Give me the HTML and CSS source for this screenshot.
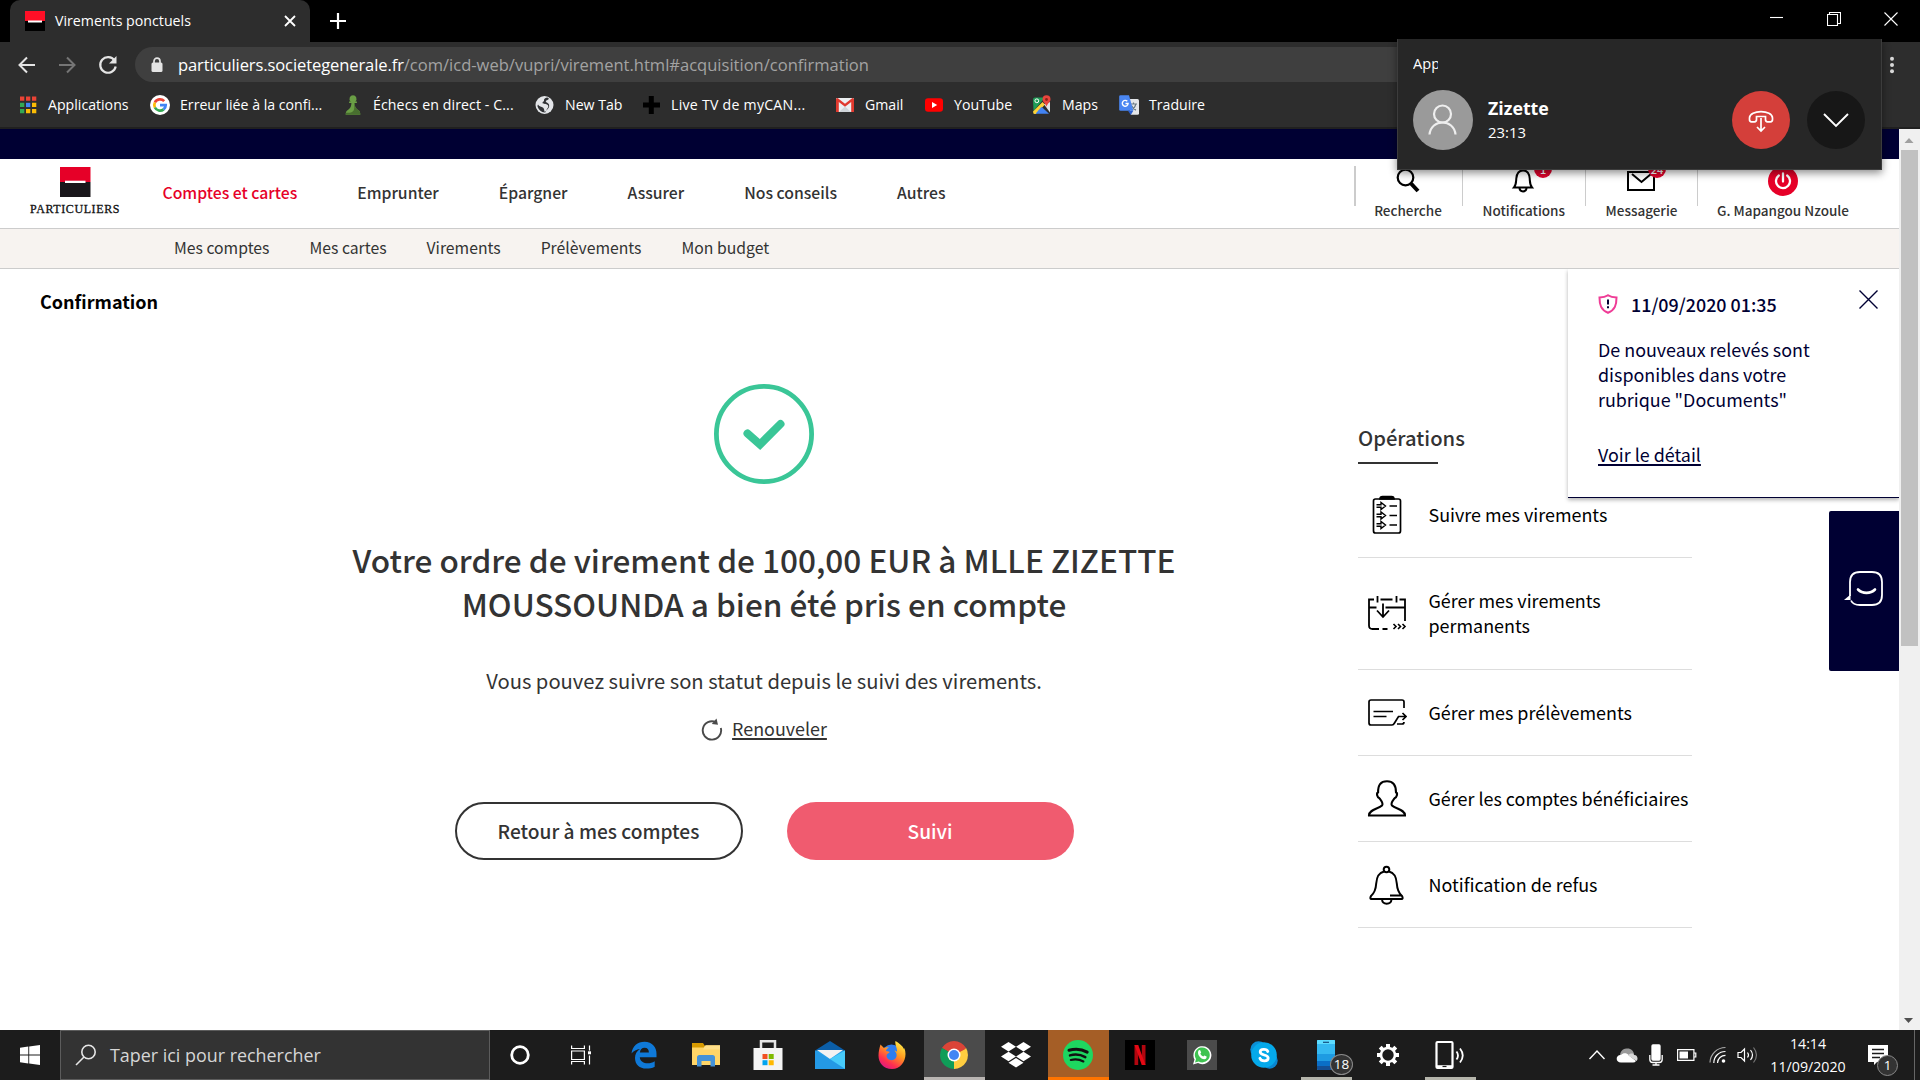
FILE: index.html
```html
<!DOCTYPE html>
<html lang="fr">
<head>
<meta charset="utf-8">
<title>Virements ponctuels</title>
<link rel="stylesheet" href="styles.css">
</head>
<body>
<div class="browser">
  <div class="tabstrip">
    <div class="tab">
      <svg class="favicon" width="20" height="20" viewBox="0 0 20 20"><path fill="#ff0f26" d="M0 0h20v10H0z"/><path d="M0 10h20v10H0z"/><path fill="#fff" d="M3 9.5h14v2H3z"/></svg>
      <span class="tab-title">Virements ponctuels</span>
      <svg class="tab-close" width="12" height="12" viewBox="0 0 12 12" stroke="#fff" stroke-width="1.8"><path d="M1 1l10 10M11 1L1 11"/></svg>
    </div>
    <svg class="new-tab" width="16" height="16" viewBox="0 0 16 16" stroke="#fff" stroke-width="2.2"><path d="M8 0v16M0 8h16"/></svg>
    <div class="win-controls">
      <svg width="14" height="14" viewBox="0 0 14 14" stroke="#fff" stroke-width="1.1"><path d="M0 5.5h13"/></svg>
      <svg width="14" height="14" viewBox="0 0 14 14" fill="none" stroke="#fff" stroke-width="1.1"><path d="M.5 2.5h10v11H.5zM2.5 2.500V.5h11v11h-3"/></svg>
      <svg width="14" height="14" viewBox="0 0 14 14" stroke="#fff" stroke-width="1.1"><path d="M.5 .5l13 13M13.500 .5l-13 13"/></svg>
    </div>
  </div>
  <div class="toolbar">
    <svg width="18" height="18" viewBox="0 0 18 18" fill="none" stroke="#e4e4e4" stroke-width="2"><path d="M17 9H2M9 1.500L1.500 9 9 16.500"/></svg>
    <svg width="18" height="18" viewBox="0 0 18 18" fill="none" stroke="#757575" stroke-width="2"><path d="M1 9h15M9 1.500L16.500 9 9 16.500"/></svg>
    <svg width="20" height="20" viewBox="0 0 20 20" fill="none" stroke="#e4e4e4" stroke-width="2.200"><path d="M16.500 5.500A7.800 7.800 0 1 0 17.700 11.500"/><path fill="#e4e4e4" stroke="none" d="M18.500 1v7.500H11z"/></svg>
    <div class="omnibox">
      <svg width="12" height="16" viewBox="0 0 12 16"><path fill="none" stroke="#e4e4e4" stroke-width="1.700" d="M3 7V4.200a3 3 0 0 1 6 0V7"/><rect x=".5" y="5.500" width="11" height="9.500" rx="1.500" fill="#e4e4e4"/></svg>
      <span class="url"><b>particuliers.societegenerale.fr</b>/com/icd-web/vupri/virement.html#acquisition/confirmation</span>
    </div>
    <svg class="kebab" width="6" height="18" viewBox="0 0 6 18" fill="#d8d8d8"><circle cx="3" cy="2.800" r="2"/><circle cx="3" cy="9" r="2"/><circle cx="3" cy="15.200" r="2"/></svg>
  </div>
  <div class="bookmarks">
    <span class="bm"><svg width="20" height="20" viewBox="0 0 20 20"><path fill="#ea4335" d="M2 1.500h4.300v4.300H2zM8 1.500h4.300v4.300H8zM14 1.500h4.300v4.300H14z"/><path fill="#34a853" d="M2 7.800h4.300v4.300H2zM2 14h4.300v4.300H2z"/><path fill="#4285f4" d="M8 7.800h4.300v4.300H8z"/><path fill="#fbbc05" d="M14 7.800h4.300v4.300H14zM8 14h4.300v4.300H8zM14 14h4.300v4.300H14z"/></svg>Applications</span>
    <span class="bm"><svg width="20" height="20" viewBox="0 0 20 20" fill="none" stroke-width="2.700"><circle cx="10" cy="10" r="10" fill="#fff"/><path stroke="#ea4335" d="M4.900 7.500A5.700 5.700 0 0 1 14.200 6.200"/><path stroke="#fbbc05" d="M4.900 7.500a5.700 5.700 0 0 0 0 5"/><path stroke="#34a853" d="M4.900 12.500a5.700 5.700 0 0 0 8.700 1.900"/><path stroke="#4285f4" d="M10 10.100h5.700a5.700 5.700 0 0 1-2.100 4.300"/></svg>Erreur liée à la confi...</span>
    <span class="bm"><svg width="20" height="20" viewBox="0 0 20 20"><path fill="#6a9e45" d="M10 .3a3.600 3.600 0 0 1 2.400 6.200h1.500v1.600h-2.300c.2 4 1.300 5.600 4.200 7.500 1.600 1.100 1.500 4.100 1.500 4.100H2.700s-.1-3 1.500-4.100c2.900-1.900 4-3.500 4.200-7.500H6.100V6.500h1.500A3.600 3.600 0 0 1 10 .3z"/><path fill="#486f2f" d="M11 8h.600c.200 4 1.300 5.600 4.200 7.500 1.600 1.100 1.500 4.200 1.500 4.200H3v-2c8 .5 9-2 8-9.700z"/></svg>Échecs en direct - C...</span>
    <span class="bm"><svg width="20" height="20" viewBox="0 0 20 20"><circle cx="9.500" cy="10" r="9" fill="#e3e5e8"/><path fill="#303235" d="M12.500 2.500c-2 .2-4 1.500-3.500 3 .4 1.200-1.500 1-1.500 2.300 0 1.400 3 1 4.500 1.700 1.700.7 1.600 2.700.5 3.800-.8.900-1.200 2.900-2.700 3.700-.8-1-.3-3.200-1.600-4.200C6.600 11.600 4 11.500 3 9.500L2.400 11c1 3.500 3.600 6.500 7.600 6.500 1.500-.3.500-1.400 1.500-2.200 1.800-1.300 3.300-3.300 2.500-5.700-.6-1.700-3-2-3.200-3.100-.2-1.300 2.300-1.200 3.200-2.700z"/></svg>New Tab</span>
    <span class="bm"><svg width="20" height="20" viewBox="0 0 20 20"><path d="M7.800 1h5v6.500H19v5h-6.200V19h-5v-6.500H2v-5h5.800z"/></svg>Live TV de myCAN...</span>
    <span class="bm"><svg width="20" height="20" viewBox="0 0 20 20"><rect x="1" y="3" width="18" height="14" rx="1.300" fill="#eceff1"/><path fill="#cfd4d8" d="M4 17l6-5.500 6 5.500z"/><path fill="#e0392e" d="M1 17V4.300Q1.300 3 2.600 3L10 8.800 17.400 3Q18.700 3 19 4.300V17h-2.800V6.900L10 11.700 3.800 6.900V17z"/></svg>Gmail</span>
    <span class="bm"><svg width="20" height="20" viewBox="0 0 20 20"><rect x="1" y="3.300" width="18" height="13.500" rx="3" fill="#f00"/><path fill="#fff" d="M8 7l5.200 3L8 13z"/></svg>YouTube</span>
    <span class="bm"><svg width="20" height="20" viewBox="0 0 20 20"><path fill="#1e9d57" d="M1 4.500Q1 2.500 3 2.500h10L1.500 16z"/><path fill="#fdd338" d="M1 16.500L10.500 7l2.500 2.500L4 19H2.500Q1 19 1 16.500z"/><path fill="#4283f3" d="M3.500 18.700l6-7 7.500 7z"/><path fill="#dfe3e6" d="M12 9.300L18 7v10.500z"/><circle cx="4.800" cy="5.800" r="1.900" fill="none" stroke="#fff" stroke-width="1"/><path fill="#e8453c" d="M14.500.3a4 4 0 0 1 4 4c0 3-3 3.700-4 7.500-1-3.800-4-4.500-4-7.500a4 4 0 0 1 4-4z"/><circle cx="14.500" cy="4.500" r="1.400" fill="#8c2019"/></svg>Maps</span>
    <span class="bm"><svg width="20" height="20" viewBox="0 0 20 20"><path fill="#e4e6e9" d="M8 4h10.500Q20 4 20 5.500v13Q20 19.800 18.500 19.800H12z"/><path fill="none" stroke="#6a7a84" stroke-width="1.200" d="M11 9h7M14.500 7.500V9M16.800 9c-.5 3-2.500 5-4.300 6M12.500 10.500c1 2.500 2.800 3.800 4.500 4.600"/><path fill="#4a86f2" d="M1.500.2H10l4.300 15.600H1.500Q.2 15.800.2 14.500v-13Q.2.200 1.500.200z"/><path fill="#2b5fd0" d="M9 15.800h5.300L11.800 20z"/><path fill="none" stroke="#fff" stroke-width="1.400" d="M8.300 6.300A2.900 2.900 0 1 0 9.100 8.500H6.500"/></svg>Traduire</span>
  </div>

  <div class="viewport">
    <div class="page">
      <div class="navy-band"></div>
      <header class="site-header">
        <div class="brand">
          <svg width="31" height="30" viewBox="0 0 31 30"><path fill="#e60028" d="M0 0h30.500v15H0z"/><path fill="#1a171b" d="M0 15h30.500v15H0z"/><path fill="#fff" d="M5 13.700h20.500v2.300H5z"/></svg>
          <span>PARTICULIERS</span>
        </div>
        <nav class="main-nav"><a class="active">Comptes et cartes</a><a>Emprunter</a><a>Épargner</a><a>Assurer</a><a>Nos conseils</a><a>Autres</a></nav>
        <div class="tools">
          <div class="tool first"><svg width="28" height="28" viewBox="0 0 28 28" fill="none" stroke="#000"><circle cx="11.500" cy="11.500" r="7.800" stroke-width="2.200"/><path stroke-width="4" d="M17 17.500l7 7.500"/></svg><span>Recherche</span></div>
          <div class="tool"><svg width="28" height="28" viewBox="0 0 28 28" fill="none" stroke="#000" stroke-width="2"><path d="M5 21.500c2.200-2.500 2-5 2.300-9C7.800 7 10 4.500 14 4.500s6.200 2.500 6.700 8c.3 4 .1 6.500 2.300 9z"/><path d="M10.500 22c.3 4.500 6.700 4.500 7 0M14 4.500V2.500"/></svg><i class="badge">1</i><span>Notifications</span></div>
          <div class="tool"><svg width="28" height="28" viewBox="0 0 28 28" fill="none" stroke="#000" stroke-width="2"><path d="M1 6h26v18H1z"/><path d="M5 8l9.500 8L24 8"/></svg><i class="badge">24</i><span>Messagerie</span></div>
          <div class="tool user"><svg width="30" height="30" viewBox="0 0 30 30" fill="none" stroke="#fff" stroke-width="2.300"><circle cx="15" cy="15" r="15" fill="#e60028" stroke="none"/><path stroke-linecap="round" d="M10.800 9.500a7 7 0 1 0 8.400 0M15 7.500v8"/></svg><span>G. Mapangou Nzoule</span></div>
        </div>
      </header>
      <nav class="sub-nav"><a>Mes comptes</a><a>Mes cartes</a><a>Virements</a><a>Prélèvements</a><a>Mon budget</a></nav>
      <main>
        <section class="confirm">
          <h1>Confirmation</h1>
          <div class="result">
            <svg width="100" height="100" viewBox="0 0 100 100" fill="none" stroke="#3ac697"><circle cx="50" cy="50" r="47.600" stroke-width="4.800"/><path stroke-width="8" stroke-linecap="round" stroke-linejoin="miter" d="M33.500 49.500L46 60.500 66.500 40"/></svg>
            <h2>Votre ordre de virement de 100,00 EUR à MLLE ZIZETTE<br>MOUSSOUNDA a bien été pris en compte</h2>
            <p>Vous pouvez suivre son statut depuis le suivi des virements.</p>
            <div class="renew"><svg width="22" height="24" viewBox="0 0 22 24" fill="none" stroke="#4a4a4a" stroke-width="1.900"><path d="M15 4.200A9.200 9.200 0 1 0 19.800 10"/><path fill="#4a4a4a" stroke="none" d="M15.500.500L17 6.800 10.800 6z"/></svg><a>Renouveler</a></div>
            <div class="buttons"><a class="btn outline">Retour à mes comptes</a><a class="btn solid">Suivi</a></div>
          </div>
        </section>
        <aside>
          <h3>Opérations</h3>
          <ul>
            <li><svg width="40" height="44" viewBox="0 0 40 44" fill="none" stroke="#000" stroke-width="1.700"><rect x="6.500" y="6" width="27" height="34" rx="2"/><path fill="#000" d="M13 6q0-2.500 2.500-2.500h9Q27 3.500 27 6z"/><path d="M22.500 13H30M22.500 22.500H30M22.500 32H30"/><path stroke-width="1.400" d="M9.500 11.700H14V9.500l4.500 3.500-4.500 3.500v-2.200H9.500M9.500 21.200H14V19l4.500 3.500L14 26v-2.200H9.500M9.500 30.700H14v-2.200l4.500 3.500-4.500 3.500v-2.200H9.500"/></svg>Suivre mes virements</li>
            <li class="tall"><svg width="40" height="44" viewBox="0 0 40 44" fill="none" stroke="#000" stroke-width="1.800"><path d="M12 38H5.500Q2 38 2 34.500V8.500h5M10.500 5v6.500M13.500 8.500h12M29.500 5v6.500M32.500 8.500H38v21.500M2 16.500h7.500M18.500 16.500H38M16 12.500V25.500M10 19.500l6 6.500 6-6.500M15.500 38h5"/><path stroke-width="1.600" d="M26.500 33l2.500 2.500-2.500 2.500M31 33l2.500 2.500L31 38M35.500 33l2.500 2.500-2.500 2.500"/></svg><span>Gérer mes virements<br>permanents</span></li>
            <li><svg width="40" height="44" viewBox="0 0 40 44" fill="none" stroke="#000" stroke-width="1.700"><path d="M37 17V11q0-2-2-2H4Q2 9 2 11v21q0 2 2 2h21q1.500 0 2.500-2l4-6.500H39M6.500 20.500h19.500M6.500 25.500h13M35.500 22l3.500 3.500-3.500 3.500M30 33h5q2 0 2-2"/></svg>Gérer mes prélèvements</li>
            <li><svg width="40" height="44" viewBox="0 0 40 44" fill="none" stroke="#000" stroke-width="2.100"><path d="M2 38.500c0-6 9.500-6.500 13-10 1.700-2-.8-5-2.500-7.200-2.500-1-3.300-5-1.400-6C11 8 13.500 4.300 20 4.300S29 8 29 15.300c1.900 1 1 5-1.500 6-1.700 2.200-4.200 5.200-2.500 7.200 3.500 3.500 13 4 13 10z"/></svg>Gérer les comptes bénéficiaires</li>
            <li><svg width="40" height="44" viewBox="0 0 40 44" fill="none" stroke="#000" stroke-width="2"><circle cx="19.500" cy="6.500" r="2.800"/><path d="M17 8.500c-6 1.500-7.300 6-7.800 12C8.800 27 7.500 30 4 33q-1.500 3 .5 3h30q2 0 .5-3c-3.500-3-4.800-6-5.200-12.500-.5-6-1.800-10.500-7.800-12M15 36.500c.5 5.500 9 5.500 9.500 0M23 32.500h11"/></svg>Notification de refus</li>
          </ul>
        </aside>
      </main>
      <div class="notice">
        <div class="notice-head">
          <svg width="20" height="20" viewBox="0 0 20 20" fill="none"><path stroke="#ef3c96" stroke-width="2" d="M10 1.200c2.500 1.800 5 2.300 8.500 2.300C18.500 11 17 16 10 18.800 3 16 1.500 11 1.500 3.500c3.500 0 6-.5 8.500-2.300z"/><path stroke="#003" stroke-width="2" d="M10 5.500v5M10 12.200v2"/></svg>
          <b>11/09/2020 01:35</b>
          <svg class="x" width="19" height="19" viewBox="0 0 19 19" stroke="#003" stroke-width="1.400"><path d="M.5.500l18 18M18.500.500l-18 18"/></svg>
        </div>
        <p>De nouveaux relevés sont<br>disponibles dans votre<br>rubrique "Documents"</p>
        <a>Voir le détail</a>
      </div>
      <div class="chat"><svg width="40" height="36" viewBox="0 0 40 36" fill="none" stroke="#fff" stroke-width="1.800"><path d="M6 25V11q0-10 10-10h12q10 0 10 10v13q0 10-10 10H16q-7 0-9-4.500"/><path fill="#fff" stroke="none" d="M6.500 23.500v5.500L0 29z"/><path stroke-width="2.600" stroke-linecap="round" d="M14 18.500c4.500 4.500 12.500 4.500 17 0"/></svg></div>
    </div>
    <div class="scrollbar">
      <svg width="20" height="21" viewBox="0 0 20 21"><path fill="#a0a0a0" d="M5.500 14L10 9l4.500 5z"/></svg>
      <div class="thumb"></div>
      <svg width="20" height="20" viewBox="0 0 20 20"><path fill="#505050" d="M5 8l4.500 5L14 8z"/></svg>
    </div>
  </div>
</div>

<div class="call">
  <div class="call-app"><span>App</span></div>
  <div class="call-row">
    <svg width="60" height="60" viewBox="0 0 60 60" fill="none" stroke="#eee" stroke-width="2.200"><circle cx="30" cy="30" r="30" fill="#9a9a9a" stroke="none"/><circle cx="29.500" cy="24" r="8.500"/><path d="M16.500 44.500c1.500-16 24.500-16 26 0"/></svg>
    <div class="caller"><b>Zizette</b><span>23:13</span></div>
    <svg width="58" height="58" viewBox="0 0 58 58" fill="none" stroke="#fff" stroke-width="1.700"><circle cx="29" cy="29" r="29" fill="#d43f3a" stroke="none"/><path d="M17.500 27c0-8.500 23-8.500 23 0v1.500q0 2.300-2 2.300h-3q-2 0-2-2.300V25.500h-9v3q0 2.300-2 2.300h-3q-2 0-2-2.300zM29 27v12.500M25 36l4 4 4-4"/></svg>
    <svg class="down" width="58" height="58" viewBox="0 0 58 58" fill="none" stroke="#fff" stroke-width="1.900"><circle cx="29" cy="29" r="29" fill="#171717" stroke="none"/><path d="M17 23l12 12 12-12"/></svg>
  </div>
</div>

<footer class="taskbar">
  <div class="start"><svg width="20" height="20" viewBox="0 0 20 20" fill="#fff"><path d="M0 2.800l8.300-1.200v8H0zM9.200 1.500L20 0v9.600H9.200zM0 10.500h8.300v8L0 17.300zM9.200 10.500H20V20L9.200 18.500z"/></svg></div>
  <div class="search"><svg width="22" height="22" viewBox="0 0 22 22" fill="none" stroke="#e6e6e6" stroke-width="1.600"><circle cx="13.500" cy="8" r="6.700"/><path d="M9 13l-8 8"/></svg><span>Taper ici pour rechercher</span></div>
  <div class="apps">
    <div><svg width="22" height="22" viewBox="0 0 22 22"><circle cx="11" cy="11" r="8.300" fill="none" stroke="#fff" stroke-width="2.800"/></svg></div>
    <div class="taskview"><svg width="20" height="20" viewBox="0 0 20 20" fill="none" stroke="#fff" stroke-width="1.200"><path d="M.600.500v3h12.800v-3M.600 6h12.800v8.500H.600zM.600 19.500v-3h12.800v3M18.500.500v5M18.500 10.500v9"/><path fill="#fff" stroke="none" d="M17 6.300h3v3h-3z"/></svg></div>
    <div><svg width="26" height="28" viewBox="0 0 26 28"><path fill="#0f79d8" d="M.5 12.500C1.500 5 6.500.8 13.500.8c8 0 12 5.700 12 12v3.400H8.800c.3 4.300 4 6 7.700 6 2.800 0 5-.6 7.200-2v5.500c-2.500 1.400-5.300 1.900-8.500 1.900C8.500 27.600 4 23.500 4 17c0-3.700 1.800-7 5-9-3.500.5-6.500 2-8.500 4.500zM8.900 11.500h9c0-3-1.500-4.700-4.300-4.700s-4.400 2-4.700 4.700z"/></svg></div>
    <div><svg width="28" height="24" viewBox="0 0 28 24"><path fill="#d79a00" d="M0 0h11l2 3v3H0z"/><path fill="#ffd567" d="M0 4.500h12l2-2.300h14V22H0z"/><path fill="#ffe08a" d="M13 2.500h15v4H11z"/><path fill="#4492d8" d="M5 23.500V14.500q0-2.500 2.500-2.500h13Q23 12 23 14.500v9h-4.500V18h-9v5.500z"/></svg></div>
    <div><svg width="30" height="30" viewBox="0 0 30 30"><path fill="none" stroke="#e5e5e5" stroke-width="2.500" d="M8 10V1.300h14V10"/><path fill="#f4f4f4" d="M.5 8h29v22H.500z"/><path fill="#f25022" d="M9.500 14h5v5h-5z"/><path fill="#7fba00" d="M15.700 14h5v5h-5z"/><path fill="#00a4ef" d="M9.500 20.200h5v5h-5z"/><path fill="#ffb900" d="M15.700 20.200h5v5h-5z"/></svg></div>
    <div><svg width="30" height="28" viewBox="0 0 30 28"><path fill="#0b5ea8" d="M0 9.500L15 0l15 9.500z"/><path fill="#27a0ea" d="M0 9.500h30V28H0z"/><path fill="#f2f2f2" d="M2 9h26L15 18z"/><path fill="#47cbfa" d="M30 9.500V28L15 18z"/><path fill="#2293e0" d="M0 28V9.500L30 28z" opacity=".55"/></svg></div>
    <div><svg width="28" height="28" viewBox="0 0 28 28"><defs><linearGradient id="ff" x1=".8" y1="0" x2=".2" y2="1"><stop offset="0" stop-color="#fff04a"/><stop offset=".4" stop-color="#ff9a1f"/><stop offset=".75" stop-color="#ff2f4f"/><stop offset="1" stop-color="#d8158c"/></linearGradient></defs><circle cx="13.500" cy="13" r="9.500" fill="#2d7df0"/><path fill="url(#ff)" d="M2.500 3.500L6 7q2.500-1.300 5-.5c-2 1-3 2.300-3 3.500l3.500.7c.5 1-3 2-3 4 0 3 3.500 5 6.500 4.300 4-1 5-6 1.500-9.500 1.500.3 2 .8 2.500 1.500C19.500 6.500 16.500 4 17.500 0c3 2 7 4.500 8.500 8l.3-1C30 15.500 25 28 14 28 5.500 28 .5 22 .5 14.500.5 10 1.500 7 2.500 3.500z"/></svg></div>
    <div class="chrome"><svg width="28" height="28" viewBox="0 0 28 28"><path fill="#db4437" d="M14 14L1.900 7A14 14 0 0 1 26.100 7z"/><path fill="#0f9d58" d="M14 14L14 28A14 14 0 0 1 1.900 7z"/><path fill="#ffcd40" d="M14 14V28A14 14 0 0 0 26.100 7z"/><path fill="#db4437" d="M14 7.500h12.400L14 14z"/><path fill="#0f9d58" d="M1.900 7L8 17.500l6-3.500z"/><path fill="#ffcd40" d="M14 28l5.800-10.500L14 14z"/><circle cx="14" cy="14" r="6.500" fill="#fff"/><circle cx="14" cy="14" r="5" fill="#4285f4"/></svg></div>
    <div><svg width="30" height="26" viewBox="0 0 30 26" fill="#fff"><path d="M7.500 0L15 4.800 7.500 9.600 0 4.800zM22.500 0L30 4.800l-7.500 4.800L15 4.800zM7.500 9.700L15 14.500 7.500 19.300 0 14.500zM22.500 9.700L30 14.500l-7.500 4.800-7.500-4.800zM15 16l7.500 4.800L15 25.600l-7.500-4.800z"/></svg></div>
    <div class="spotify"><svg width="30" height="30" viewBox="0 0 30 30" fill="none" stroke="#111" stroke-linecap="round"><circle cx="15" cy="15" r="15" fill="#1ed760" stroke="none"/><path stroke-width="3" d="M6 10.300c6-1.700 13-1.100 18.200 1.800"/><path stroke-width="2.500" d="M7 15.400c5.500-1.500 10.700-.8 15.300 1.700"/><path stroke-width="2.100" d="M7.800 20c4.500-1.200 8.700-.7 12.600 1.500"/></svg></div>
    <div><svg width="30" height="30" viewBox="0 0 30 30"><path d="M0 0h30v30H0z"/><path fill="#b1060f" d="M9.500 5h3.700v20H9.500zM16.800 5h3.700v20h-3.700z"/><path fill="#e50914" d="M9.500 5h3.700l7.300 20h-3.700z"/></svg></div>
    <div><svg width="30" height="30" viewBox="0 0 30 30"><path fill="#4b4b4b" d="M0 0h30v30H0z"/><path fill="#fff" d="M6 24.500l1.500-5A9 9 0 1 1 11 23z"/><path fill="#3fc351" d="M8 22.500l1-3.500a7.500 7.500 0 1 1 2.700 2.500z"/><path fill="#fff" d="M11.500 10.500q1-1 1.700-.3l1 2.300-.9 1.200q1 2 3 2.900l1-1.200 2.300 1.100q.2 2.500-2.300 2.700c-3.500 0-7.800-4.700-5.800-8.700z"/></svg></div>
    <div><svg width="30" height="30" viewBox="0 0 30 30"><circle cx="9.500" cy="9.500" r="8.200" fill="#0b8fd6"/><circle cx="20.500" cy="20.500" r="8.200" fill="#0a86d0"/><circle cx="15" cy="15" r="12.800" fill="#05a9ea"/><path fill="none" stroke="#fff" stroke-width="2.800" stroke-linecap="round" d="M18.800 11.500c-1-3-7.600-3-7.600.5 0 3.700 8 2.300 8 6 0 3.800-7 3.800-8.300.3"/></svg></div>
    <div class="open phone"><svg width="18" height="30" viewBox="0 0 18 30"><rect width="18" height="30" rx="1" fill="#35b9f1"/><path fill="#5ddcff" d="M0 1q0-1 1-1h16q1 0 1 1v3H0z"/><path fill="#1e9be2" d="M0 14h18v7H0z"/><path fill="#0a6fc7" d="M0 21h18v5H0z"/><path fill="#144f94" d="M0 26h18v3q0 1-1 1H1q-1 0-1-1z"/><path fill="#134f80" d="M6 1.700h6v1.200H6z"/></svg><i>18</i></div>
    <div><svg width="24" height="24" viewBox="0 0 24 24" fill="none" stroke="#fff"><circle cx="12" cy="12" r="7" stroke-width="2.600"/><path stroke-width="4" d="M12 1v4M12 19v4M1 12h4M19 12h4M4.200 4.200L7 7M17 17l2.800 2.800M19.800 4.200L17 7M7 17l-2.800 2.800"/></svg></div>
    <div class="open"><svg width="30" height="30" viewBox="0 0 30 30" fill="none" stroke="#fff"><rect x="1.500" y="2" width="16" height="26" rx="1" stroke-width="2.200"/><path stroke-width="2.600" d="M2 26.500h15"/><path stroke="#1c1c1c" stroke-width="1.200" d="M7.500 26.500h4"/><path stroke-width="1.800" d="M21.500 11.500q3 4 0 8M25 8.500q5.500 7 0 14"/></svg></div>
  </div>
  <div class="tray">
    <svg width="18" height="12" viewBox="0 0 18 12" fill="none" stroke="#fff" stroke-width="1.400"><path d="M1.500 10L9 2l7.500 8"/></svg>
    <svg width="22" height="16" viewBox="0 0 22 16"><path fill="#9a9a9a" d="M4 9c0-4 2-7 6.500-7.500C15 1 17.500 4 18 7l-8 5z"/><path fill="#fff" d="M5 15.500C-1 15.500-.5 7.500 5 8c2-2.500 6-2.300 7.500 0L20 14q-1 1.500-3 1.500z"/><path fill="#d8d8d8" d="M12 8.500c2-2.500 5-2.500 6.300-.5C21.500 8 22.500 12 20.500 14z"/></svg>
    <svg width="14" height="22" viewBox="0 0 14 22" fill="none" stroke="#fff" stroke-width="1.300"><rect x="3" y="1" width="8" height="15" rx="1" fill="#fff"/><path d="M.8 11v4.500q0 3 3 3h6.400q3 0 3-3V11M7 18.500V21M3.500 21h7"/></svg>
    <svg width="20" height="12" viewBox="0 0 20 12"><path fill="none" stroke="#fff" stroke-width="1.200" d="M.6.600h16.300v10.800H.600zM17 4h1.800v4H17"/><path fill="#fff" d="M2.500 2.500h8.500v7H2.500z"/></svg>
    <svg width="18" height="18" viewBox="0 0 18 18" fill="none" stroke="#fff" stroke-width="1.200"><path stroke="#aaa" d="M1 16.500A15.500 15.500 0 0 1 16.500 1.500"/><path d="M4.800 17A11.500 11.500 0 0 1 16.500 5.500M8.500 17A8 8 0 0 1 16.500 9.300"/><circle cx="14.500" cy="15" r="1.800" fill="#fff" stroke="none"/></svg>
    <svg width="22" height="18" viewBox="0 0 22 18" fill="none" stroke="#fff" stroke-width="1.200"><path d="M1 6.500h3L7.500 3v12L4 11.500H1z"/><path d="M10.500 6.500q2 2.500 0 5M13.500 4q4 5 0 10"/><path stroke="#777" d="M16.500 1.500q6 7.500 0 15"/></svg>
    <div class="clock"><span>14:14</span><span>11/09/2020</span></div>
    <div class="action"><svg width="20" height="20" viewBox="0 0 20 20"><path fill="#fff" d="M0 0h20v17H9l-3 3v-3H0z"/><path stroke="#1c1c1c" stroke-width="1.300" d="M4 4.500h12M4 8.500h12M4 12.500h8"/></svg><i>1</i></div>
    <div class="peek"></div>
  </div>
</footer>
</body>
</html>
```
FILE: styles.css
```css
* { box-sizing: border-box; }
body {
  margin: 0;
  width: 1920px;
  height: 1080px;
  overflow: hidden;
  display: flex;
  flex-direction: column;
  background: #fff;
  font-family: "Open Sans", "Noto Sans", sans-serif;
}
svg { display: block; flex: none; }
i { font-style: normal; }

.browser { flex: 1; display: flex; flex-direction: column; min-height: 0; }

/* Window chrome */
.tabstrip { height: 42px; background: #000; display: flex; align-items: center; }
.tab {
  width: 300px; height: 42px; margin-left: 10px; padding: 0 14px 0 15px;
  display: flex; align-items: center;
  background: #2d2d2d; border-radius: 10px 10px 0 0; color: #fff;
}
.tab-title { flex: 1; margin-left: 10px; font-size: 14.2px; line-height: 20px; white-space: nowrap; }
.new-tab { margin-left: 20px; }
.win-controls { margin-left: auto; margin-right: 22px; margin-bottom: 5px; display: flex; gap: 43px; }
.toolbar { height: 46px; background: #2d2d2d; display: flex; align-items: center; padding: 0 25px 1px 18px; }
.toolbar > svg:nth-child(2) { margin-left: 22px; }
.toolbar > svg:nth-child(3) { margin-left: 22px; }
.omnibox {
  flex: 1; height: 35px; margin-left: 17px; padding-left: 16px; border-radius: 18px;
  display: flex; align-items: center; background: #3f3f3f; color: #a3a3a3;
}
.url { margin-left: 15px; font-size: 16.55px; white-space: nowrap; }
.url b { font-weight: 400; color: #fff; letter-spacing: -.1px; }
.kebab { margin-left: 14px; }
.bookmarks {
  height: 41px; padding: 0 0 5px 18px; background: #2d2d2d; border-bottom: 2px solid #202020;
  display: grid; align-items: center;
  grid-template-columns: 132px 193px 192px 106px 194px 89px 108px 87px auto;
}
.bm { display: flex; align-items: center; gap: 10px; color: #fff; font-size: 14.15px; line-height: 20px; white-space: nowrap; }
.bm:nth-child(3) { letter-spacing: .1px; }
.bm:nth-child(5) { letter-spacing: .25px; }

/* Page */
.viewport { flex: 1; display: flex; min-height: 0; }
.page {
  flex: 1; position: relative; display: flex; flex-direction: column; color: #333;
  font-family: "Noto Sans CJK SC", "Noto Sans", sans-serif;
}
.navy-band { height: 30px; background: #003; }
.site-header { height: 70px; display: flex; border-bottom: 1px solid #ccc; }
.brand { width: 90px; margin-left: 30px; padding-top: 8px; display: flex; flex-direction: column; align-items: center; gap: 4px; }
.brand span { font: 500 12px/16px "Liberation Serif", serif; letter-spacing: .6px; color: #111; -webkit-text-stroke: .3px #111; }
.main-nav { margin-left: 42.5px; padding-bottom: 1px; display: flex; align-items: center; gap: 60px; font-weight: 500; font-size: 15.75px; line-height: 24px; white-space: nowrap; }
.main-nav .active { color: #e60028; }
.tools { margin: 7px 31px 0 auto; display: flex; }
.tool { position: relative; height: 58px; width: 123.500px; display: flex; flex-direction: column; align-items: center; }
.tool::before { content: ""; position: absolute; left: 0; top: 0; width: 1px; height: 40px; background: #ccc; }
.tool.first { width: 108px; }
.tool.first::before { width: 2px; }
.tool:nth-child(3) { width: 112px; }
.tool.user { width: 171px; }
.tool span { position: relative; left: .5px; margin-top: 6px; font-weight: 500; font-size: 13.500px; line-height: 20px; white-space: nowrap; }
.tool.user span { margin-top: 4px; }
.badge {
  position: absolute; top: -6px; left: 50%; margin-left: 11px; width: 18px; height: 18px; border-radius: 50%;
  background: #e0032c; color: #fff; font-size: 11px; line-height: 18px; font-weight: 500; text-align: center;
}
.tool:nth-child(3) .badge { margin-left: 7px; }
.sub-nav { height: 40px; padding: 0 0 1px 174px; display: flex; align-items: center; gap: 40px; background: #f7f3f0; border-bottom: 1px solid #ccc; font-size: 15.750px; line-height: 24px; white-space: nowrap; }
main { flex: 1; display: grid; grid-template-columns: 1358px 334px; align-items: start; }
.confirm h1 { margin: 19px 0 0 40px; font-size: 18px; font-weight: 700; line-height: 26px; color: #000; }
.result { padding: 70px 0 0 170px; display: flex; flex-direction: column; align-items: center; }
.result h2 { margin: 53px 0 0; font-weight: 500; font-size: 31.550px; line-height: 44px; text-align: center; white-space: nowrap; }
.result p { margin: 42px 0 0; font-size: 20.200px; line-height: 28px; }
.renew { margin-top: 18px; display: flex; align-items: center; gap: 9px; font-size: 17.900px; line-height: 26px; }
.renew svg { margin-top: 5px; }
.renew a, .notice a { text-decoration: underline; text-decoration-thickness: 2px; text-underline-offset: 2px; }
.buttons { margin-top: 60px; display: flex; gap: 44px; }
.btn { width: 288px; height: 58px; border-radius: 29px; display: flex; align-items: center; justify-content: center; font-weight: 500; font-size: 19.150px; line-height: 28px; }
.btn.outline { border: 2px solid #333; }
.btn.solid { width: 287px; background: #f05b6f; color: #fff; }

aside h3 { margin: 155px 0 0; font-weight: 500; font-size: 20.200px; line-height: 28px; }
aside h3::after { content: ""; display: block; width: 80px; height: 2px; margin-top: 10px; background: #333; }
aside ul { margin: 8px 0 0; padding: 0; list-style: none; color: #000; font-size: 17.930px; line-height: 25px; }
aside li { height: 86px; padding-left: 9px; display: flex; align-items: center; gap: 21.5px; border-bottom: 1px solid #ddd; white-space: nowrap; }
aside li.tall { height: 112px; padding-bottom: 2px; }

.notice {
  position: absolute; top: 140px; right: 0; width: 331px; height: 229px; padding: 20px 21px 0 30px;
  background: #fff; color: #003; border-bottom: 1px solid #003; box-shadow: 0 2px 4px rgba(0, 0, 0, .3);
  clip-path: inset(0 0 -8px -4px);
}
.notice-head { display: flex; align-items: flex-start; height: 44px; }
.notice-head svg { margin-top: 5px; }
.notice-head b { margin: 2px 0 0 13px; font-weight: 500; font-size: 17.900px; line-height: 26px; }
.notice-head .x { margin: 1px 0 0 auto; }
.notice p { margin: 4px 0 0; font-size: 17.900px; line-height: 25px; white-space: nowrap; }
.notice a { display: inline-block; margin-top: 29px; font-size: 17.900px; line-height: 26px; }
.chat {
  position: absolute; top: 382px; right: 0; width: 70px; height: 160px; padding: 0 0 4px 15px;
  display: flex; align-items: center; background: #003; border-radius: 2px 0 0 2px;
}
.scrollbar { width: 21px; background: #f0f0f0; display: flex; flex-direction: column; }
.thumb { width: 17px; height: 496px; margin: 0 auto auto 2px; background: #c1c1c1; }

/* Call overlay */
.call {
  position: absolute; left: 1397px; top: 39px; width: 485px; height: 131px;
  background: #272727; border: 1px solid #3c3c3c; border-width: 0 1px 1px; color: #fff;
  box-shadow: 0 3px 8px rgba(0, 0, 0, .45);
}
.call-app { margin: 13px 0 0 15px; width: 25px; overflow: hidden; font-size: 14.600px; line-height: 22px; white-space: nowrap; }
.call-row { margin: 16px 16px 0 15px; display: flex; align-items: center; }
.caller { flex: 1; margin-left: 15px; display: flex; flex-direction: column; line-height: 24px; font-size: 14.900px; }
.caller b { font-size: 17.800px; }
.down { margin-left: 17px; }

/* Taskbar */
.taskbar { height: 50px; background: #1c1c1c; display: flex; color: #fff; }
.start { width: 60px; display: flex; align-items: center; justify-content: center; }
.search { width: 430px; display: flex; align-items: center; padding-left: 14px; gap: 13px; background: #333; border: 1px solid #5c5c5c; color: #d6d6d6; font-size: 17.900px; }
.apps { margin-left: -1px; display: grid; grid-template-columns: repeat(16, 62px); }
.apps > div { position: relative; display: flex; align-items: center; justify-content: center; }
.apps .taskview { padding-right: 3px; }
.apps .chrome { background: #4b4b4b; border-bottom: 3px solid #b9b5b2; padding-top: 3px; }
.apps .spotify { background: #a55e26; border-bottom: 3px solid #ff7400; padding-top: 3px; }
.apps .open::after { content: ""; position: absolute; left: 6px; right: 5px; bottom: 0; height: 3px; background: #b5b5ab; }
.apps .chrome, .apps .spotify { margin-left: 1px; padding-right: 1px; }
.apps i, .action i {
  position: absolute; width: 23px; height: 21px; border-radius: 50%; border: 1px solid #8a8a8a;
  background: #333; font-size: 13.5px; line-height: 19px; text-align: center;
}
.phone i { left: 35px; top: 24px; }
.tray { flex: 1; display: flex; align-items: center; padding-left: 107px; }
.tray > svg:nth-child(2) { margin-left: 10px; }
.tray > svg:nth-child(3) { margin-left: 11px; }
.tray > svg:nth-child(4) { margin-left: 14px; }
.tray > svg:nth-child(5) { margin-left: 12px; }
.tray > svg:nth-child(6) { margin-left: 10px; }
.clock { margin-left: 10px; width: 78px; display: flex; flex-direction: column; align-items: center; font-size: 14.200px; line-height: 23px; }
.action { position: relative; margin-left: 21px; }
.action i { left: 9px; top: 10px; width: 21px; }
.peek { margin-left: auto; margin-right: 5px; width: 1px; height: 50px; background: #666; }
```
